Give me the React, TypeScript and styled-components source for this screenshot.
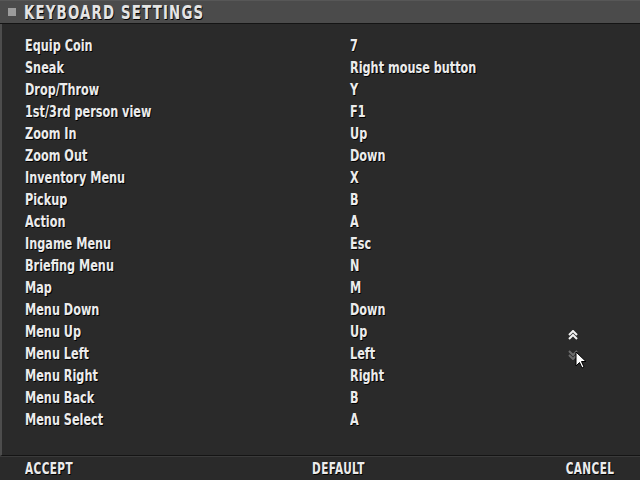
import React from 'react';
import styled, { createGlobalStyle } from 'styled-components';

const GlobalStyle = createGlobalStyle`
  html, body {
    margin: 0;
    padding: 0;
    background: #2a2a2a;
  }
`;

const bindings: [string, string][] = [
  ['Equip Coin', '7'],
  ['Sneak', 'Right mouse button'],
  ['Drop/Throw', 'Y'],
  ['1st/3rd person view', 'F1'],
  ['Zoom In', 'Up'],
  ['Zoom Out', 'Down'],
  ['Inventory Menu', 'X'],
  ['Pickup', 'B'],
  ['Action', 'A'],
  ['Ingame Menu', 'Esc'],
  ['Briefing Menu', 'N'],
  ['Map', 'M'],
  ['Menu Down', 'Down'],
  ['Menu Up', 'Up'],
  ['Menu Left', 'Left'],
  ['Menu Right', 'Right'],
  ['Menu Back', 'B'],
  ['Menu Select', 'A'],
];

const Screen = styled.div`
  position: relative;
  width: 640px;
  height: 480px;
  overflow: hidden;
  display: flex;
  flex-direction: column;
  background: #2a2a2a;
  font-family: 'DejaVu Sans Condensed', 'DejaVu Sans', sans-serif;
  font-weight: bold;
  color: #ececec;
  text-shadow: 1px 1px 0 #000;
`;

// the game font is a tall, narrow heavy face: squeeze a bold condensed one
const Squeezed = styled.span<{ $scale?: number; $origin?: string }>`
  display: inline-block;
  white-space: nowrap;
  transform: scaleX(${(p) => p.$scale ?? 0.835});
  transform-origin: ${(p) => p.$origin ?? 'left'} center;
`;

const TitleBar = styled.header`
  height: 24px;
  box-sizing: border-box;
  display: flex;
  align-items: center;
  gap: 8px;
  padding-left: 8px;
  background: #4b4b4b;
  border-top: 1px solid #575757;
  border-bottom: 1px solid #141414;
`;

const Bullet = styled.span`
  width: 8px;
  height: 8px;
  background: #9c9c9c;
`;

const Title = styled.h1`
  margin: 0;
  font-size: 19px;
  line-height: 22px;
  letter-spacing: 1.5px;
  color: #e4e4e4;
`;

const Body = styled.main`
  flex: 1;
  display: flex;
  border-left: 2px solid #4d4d4d;
  border-bottom: 1px solid #141414;
  box-shadow: 0 1px 0 #3a3a3a;
`;

const List = styled.ul`
  list-style: none;
  margin: 0;
  padding: 11px 0 0 23px;
  flex: 1;
`;

const Row = styled.li`
  height: 22px;
  display: grid;
  grid-template-columns: 325px 1fr;
  align-items: center;
  font-size: 15px;
`;

const ScrollCol = styled.div`
  width: 72px;
  padding-top: 306px;
  display: flex;
  flex-direction: column;
  align-items: flex-start;
  gap: 10px;
`;

const Arrow = styled.svg<{ $dim?: boolean }>`
  width: 10px;
  height: 10px;
  color: ${(p) => (p.$dim ? '#6c6c6c' : '#f2f2f2')};
`;

const Footer = styled.footer`
  height: 24px;
  box-sizing: border-box;
  display: grid;
  grid-template-columns: 287px 1fr auto;
  align-items: center;
  padding: 2px 26px 0 25px;
  font-size: 15px;
  letter-spacing: 0.5px;
`;

const Cursor = styled.svg`
  position: absolute;
  left: 575px;
  top: 351px;
  width: 12px;
  height: 20px;
`;

const App = () => {
  return (
    <Screen>
      <GlobalStyle />
      <TitleBar>
        <Bullet />
        <Title>
          <Squeezed $scale={0.78}>KEYBOARD SETTINGS</Squeezed>
        </Title>
      </TitleBar>
      <Body>
        <List>
          {bindings.map(([action, key]) => (
            <Row key={action}>
              <Squeezed>{action}</Squeezed>
              <Squeezed>{key}</Squeezed>
            </Row>
          ))}
        </List>
        <ScrollCol>
          <Arrow viewBox="0 0 10 10">
            <path d="M1 5 L5 1 L9 5 M1 9 L5 5 L9 9" fill="none" stroke="currentColor" strokeWidth="2" />
          </Arrow>
          <Arrow viewBox="0 0 10 10" $dim>
            <path d="M1 1 L5 5 L9 1 M1 5 L5 9 L9 5" fill="none" stroke="currentColor" strokeWidth="2" />
          </Arrow>
        </ScrollCol>
      </Body>
      <Footer>
        <Squeezed $scale={0.78}>ACCEPT</Squeezed>
        <Squeezed $scale={0.78}>DEFAULT</Squeezed>
        <Squeezed $scale={0.78} $origin="right">CANCEL</Squeezed>
      </Footer>
      <Cursor viewBox="0 0 12 20">
        <path d="M1 1 L1 15 L4.5 11.5 L7 17 L9 16 L6.5 10.5 L11 10.5 Z" fill="#fff" stroke="#000" strokeWidth="1" />
      </Cursor>
    </Screen>
  );
};

export default App;
